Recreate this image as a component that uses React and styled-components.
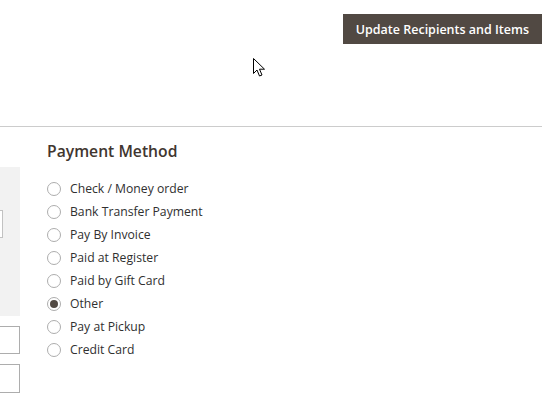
import React, { useState } from 'react';
import styled, { createGlobalStyle } from 'styled-components';

const GlobalStyle = createGlobalStyle`
  html, body {
    margin: 0;
    padding: 0;
    background: #fff;
  }
  body {
    font-family: "Open Sans", "Noto Sans", Arial, sans-serif;
    color: #303030;
  }
`;

const Page = styled.div`
  position: relative;
  width: 557px;
  height: 400px;
  overflow: hidden;
  padding-right: 15px;
  box-sizing: border-box;
`;

const Toolbar = styled.div`
  display: flex;
  justify-content: flex-end;
  align-items: flex-start;
  height: 127px;
  padding-top: 14px;
  box-sizing: border-box;
  border-bottom: 1px solid #cccccc;
`;

const PrimaryButton = styled.button`
  height: 30px;
  padding: 0 13px;
  border: none;
  background: #514943;
  color: #fff;
  font-family: "Open Sans", Arial, sans-serif;
  font-size: 12.5px;
  font-weight: 600;
  cursor: pointer;
  white-space: nowrap;
`;

const Content = styled.div`
  display: flex;
  gap: 27px;
`;

const SideColumn = styled.div`
  width: 20px;
  flex: none;
  padding-top: 40px;
  display: flex;
  flex-direction: column;
`;

const GreyPanel = styled.div`
  height: 149px;
  background: #f2f2f2;
  padding-top: 43px;
  box-sizing: border-box;
`;

const ClippedInput = styled.div`
  width: ${p => p.$width}px;
  height: ${p => p.$height}px;
  border: 1px solid ${p => p.$border};
  border-left: none;
  background: #fff;
  box-sizing: border-box;
  margin-top: ${p => p.$top || 0}px;
`;

const MainColumn = styled.div`
  flex: 1;
  padding-top: 13px;
`;

const Heading = styled.h3`
  margin: 0 0 15px;
  font-size: 15.7px;
  line-height: 22px;
  font-weight: 600;
  color: #41362f;
`;

const RadioList = styled.div`
  display: flex;
  flex-direction: column;
`;

const RadioRow = styled.label`
  display: flex;
  align-items: center;
  height: 23px;
  gap: 9px;
  font-size: 12.2px;
  color: #303030;
  cursor: pointer;
`;

const RadioCircle = styled.span`
  width: 14px;
  height: 14px;
  border-radius: 50%;
  border: 1px solid #adadad;
  box-sizing: border-box;
  background: #fff;
  display: flex;
  align-items: center;
  justify-content: center;
  flex: none;

  &::after {
    content: '';
    width: 8px;
    height: 8px;
    border-radius: 50%;
    background: #514943;
    display: ${p => (p.$checked ? 'block' : 'none')};
  }
`;

const Cursor = styled.svg`
  position: absolute;
  left: 253px;
  top: 58px;
  pointer-events: none;
`;

const methods = [
  'Check / Money order',
  'Bank Transfer Payment',
  'Pay By Invoice',
  'Paid at Register',
  'Paid by Gift Card',
  'Other',
  'Pay at Pickup',
  'Credit Card',
];

export default function App() {
  const [selected, setSelected] = useState('Other');

  return (
    <>
      <GlobalStyle />
      <Page>
        <Toolbar>
          <PrimaryButton>Update Recipients and Items</PrimaryButton>
        </Toolbar>
        <Content>
          <SideColumn>
            <GreyPanel>
              <ClippedInput $width={3} $height={28} $border="#c2c2c2" />
            </GreyPanel>
            <ClippedInput $width={20} $height={28} $border="#adadad" $top={10} />
            <ClippedInput $width={20} $height={29} $border="#adadad" $top={10} />
          </SideColumn>
          <MainColumn>
            <Heading>Payment Method</Heading>
            <RadioList>
              {methods.map(m => (
                <RadioRow key={m} onClick={() => setSelected(m)}>
                  <RadioCircle $checked={selected === m} />
                  {m}
                </RadioRow>
              ))}
            </RadioList>
          </MainColumn>
        </Content>
        <Cursor width="13" height="20" viewBox="0 0 13 20">
          <path
            d="M0.5 0.5 L0.5 15.5 L4 12 L6.5 18 L9 17 L6.5 11.2 L11.5 11.2 Z"
            fill="#fff"
            stroke="#000"
            strokeWidth="1"
            strokeLinejoin="miter"
          />
        </Cursor>
      </Page>
    </>
  );
}
